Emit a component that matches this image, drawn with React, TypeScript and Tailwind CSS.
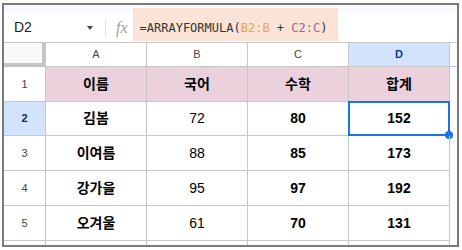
import React from "react";

const cols = ["A", "B", "C", "D"];

const rows = [
  { n: "1", cells: ["이름", "국어", "수학", "합계"], head: true, h: "h-[35px]" },
  { n: "2", cells: ["김봄", "72", "80", "152"], h: "h-[34px]" },
  { n: "3", cells: ["이여름", "88", "85", "173"], h: "h-[35px]" },
  { n: "4", cells: ["강가을", "95", "97", "192"], h: "h-[35px]" },
  { n: "5", cells: ["오겨울", "61", "70", "131"], h: "h-[35px]" },
];

const sans = "font-['Liberation_Sans','Noto_Sans_CJK_KR',sans-serif]";

const App = () => {
  return (
    <div className={`w-[462px] h-[250px] bg-white pt-[3px] pl-[2px] ${sans}`}>
      <div className="w-[457px] h-[244px] border-2 border-[#7b7b7b] overflow-hidden bg-white flex flex-col">
        {/* formula bar */}
        <div className="h-[8px] bg-[#f8f9fc] shrink-0" />
        <div className="h-[30px] shrink-0 flex items-start border-b border-[#c7c7c7]">
          <div className="w-[83px] h-[29px] flex items-center pl-[10px] text-[14px] text-[#202124]">D2</div>
          <div className="w-0 h-0 mt-[13px] border-l-[3.5px] border-r-[3.5px] border-t-[4px] border-l-transparent border-r-transparent border-t-[#444]" />
          <div className="w-px h-[16px] bg-[#dadce0] mt-[7px] ml-[12px]" />
          <div className="h-[29px] flex items-center ml-[10px] text-[16px] italic text-[#9aa0a6] font-['Liberation_Serif',serif]">fx</div>
          <div className="-mt-[5px] ml-[5px] h-[33px] w-[205px] bg-[#fbe4d7] pl-[7px] pt-[13px] text-[12px] leading-[14px] text-[#333] font-['DejaVu_Sans_Mono',monospace] whitespace-nowrap">
            =ARRAYFORMULA(<span className="text-[#f4a145]">B2:B</span> + <span className="text-[#a0619b]">C2:C</span>)
          </div>
        </div>

        {/* column headers */}
        <div className="h-[24px] shrink-0 flex border-b border-[#c7c7c7]">
          <div className="w-[42px] bg-[#f8f9fa] border-r-4 border-b-4 border-[#c4c4c4] -mb-px" />
          {cols.map((c) => (
            <div
              key={c}
              className={`w-[101px] border-r border-[#c7c7c7] flex items-center justify-center text-[11px] ${
                c === "D" ? "bg-[#d3e3fd] text-[#0b3a8a] font-bold" : "text-[#444]"
              }`}
            >
              {c}
            </div>
          ))}
        </div>

        {/* rows */}
        {rows.map((r) => (
          <div key={r.n} className={`${r.h} shrink-0 flex`}>
            <div
              className={`w-[42px] border-r border-b border-[#c7c7c7] flex items-center justify-center text-[11px] ${
                r.n === "2" ? "bg-[#d3e3fd] text-[#0b2a66] font-bold" : "text-[#444]"
              }`}
            >
              {r.n}
            </div>
            {r.cells.map((v, i) => (
              <div
                key={i}
                className={`relative w-[101px] border-r border-b border-[#c7c7c7] flex items-center justify-center text-[14px] text-black ${
                  r.head ? "bg-[#ead1dc]" : ""
                } ${i === 1 && !r.head ? "font-normal" : "font-bold"}`}
              >
                {v}
                {r.n === "2" && i === 3 && (
                  <>
                    <div className="absolute -left-px -top-px w-[102px] h-[35px] border-2 border-[#1a73e8]" />
                    <div className="absolute -right-[4px] -bottom-[4px] w-[8px] h-[8px] rounded-full bg-[#1a73e8]" />
                  </>
                )}
              </div>
            ))}
          </div>
        ))}

        {/* partial row */}
        <div className="flex flex-1">
          <div className="w-[42px] border-r border-[#c7c7c7]" />
          {cols.map((c) => (
            <div key={c} className="w-[101px] border-r border-[#c7c7c7]" />
          ))}
        </div>
      </div>
    </div>
  );
};

export default App;
